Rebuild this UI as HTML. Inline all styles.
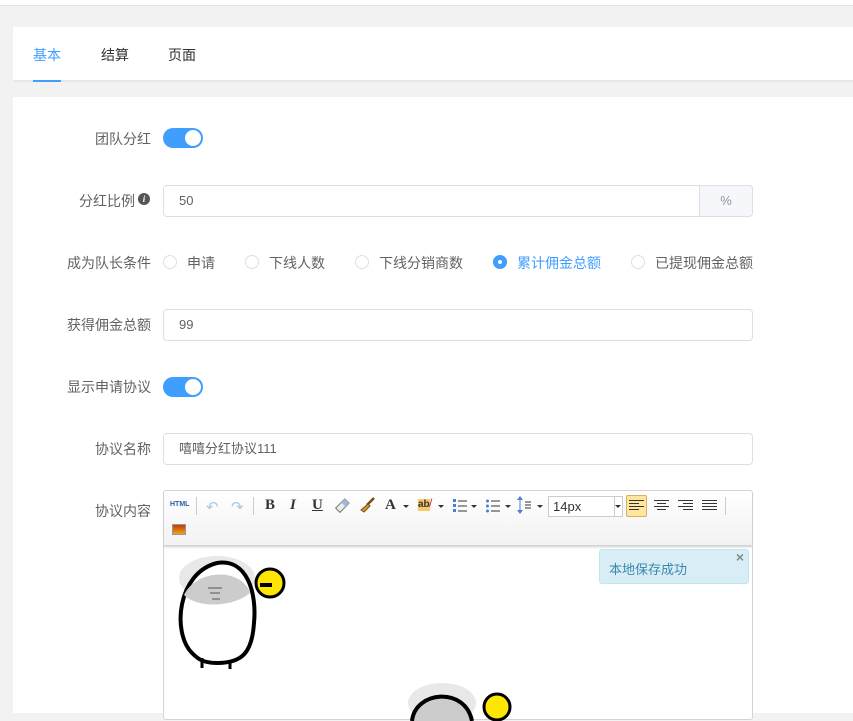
<!DOCTYPE html>
<html><head><meta charset="utf-8">
<style>
*{box-sizing:border-box;margin:0;padding:0}
body{width:853px;height:713px;overflow:hidden;background:#f2f2f2;font-family:"Liberation Sans","Noto Sans CJK SC",sans-serif;font-size:14px;color:#606266;position:relative}
.abs{position:absolute}
.top{left:0;top:0;width:853px;height:6px;background:#fff;border-bottom:1px solid #e4e4e4}
.tabs{left:13px;top:27px;width:840px;height:55px;background:#fff;border-bottom:2px solid #e4e7ed}
.tab{top:18px;font-size:14px;color:#303133}
.card{left:13px;top:97px;width:840px;height:616px;background:#fff}
.lbl{width:151px;text-align:right;font-size:14px;color:#606266}
.sw{width:40px;height:20px;border-radius:10px;background:#409eff}
.sw:after{content:"";position:absolute;right:2px;top:2px;width:16px;height:16px;border-radius:50%;background:#fff}
.inp{left:163px;width:590px;height:32px;border:1px solid #dcdfe6;border-radius:4px;background:#fff;padding-left:15px;line-height:30px;font-size:13px;color:#606266}
.rad{top:255px;width:14px;height:14px;border-radius:50%;border:1px solid #dcdfe6;background:#fff}
.rt{top:253px;font-size:14px;color:#606266}
.ed{left:163px;top:490px;width:590px;height:230px;border:1px solid #d4d4d4;border-radius:3px;background:#fff}
.tb{left:0;top:0;width:588px;height:55px;background:linear-gradient(#fff,#f2f2f2);border-bottom:1px solid #d4d4d4;box-shadow:0 1px 2px #ccc;border-radius:3px 3px 0 0}
.sep{top:6px;width:1px;height:18px;background:#ccc}
.ic{top:6px;font-family:"Liberation Serif",serif;font-size:15px;font-weight:bold;color:#333}
.car{top:14px;width:0;height:0;border-left:3px solid transparent;border-right:3px solid transparent;border-top:3px solid #333}
</style></head><body>
<div class="abs top"></div>
<div class="abs tabs">
 <div class="abs tab" style="left:20px;color:#409eff">基本</div>
 <div class="abs tab" style="left:88px">结算</div>
 <div class="abs tab" style="left:155px">页面</div>
 <div class="abs" style="left:20px;top:53px;width:28px;height:2px;background:#409eff"></div>
</div>
<div class="abs card"></div>

<div class="abs lbl" style="left:0;top:129px">团队分红</div>
<div class="abs sw" style="left:163px;top:128px"></div>

<div class="abs lbl" style="left:0;top:191px;width:135px">分红比例</div>
<div class="abs" style="left:138px;top:193px;width:12px;height:12px;border-radius:50%;background:#555;color:#fff;font:italic bold 9px 'Liberation Serif',serif;text-align:center;line-height:12px">i</div>
<div class="abs inp" style="top:185px">50</div>
<div class="abs" style="left:699px;top:185px;width:54px;height:32px;background:#f5f7fa;border:1px solid #dcdfe6;border-radius:0 4px 4px 0;text-align:center;line-height:30px;color:#909399;font-size:13px">%</div>

<div class="abs lbl" style="left:0;top:253px">成为队长条件</div>
<div class="abs rad" style="left:163px"></div><div class="abs rt" style="left:187px">申请</div>
<div class="abs rad" style="left:245px"></div><div class="abs rt" style="left:269px">下线人数</div>
<div class="abs rad" style="left:355px"></div><div class="abs rt" style="left:379px">下线分销商数</div>
<div class="abs rad" style="left:493px;background:#409eff;border-color:#409eff"><div style="position:absolute;left:4px;top:4px;width:4px;height:4px;border-radius:50%;background:#fff"></div></div><div class="abs rt" style="left:517px;color:#409eff">累计佣金总额</div>
<div class="abs rad" style="left:631px"></div><div class="abs rt" style="left:655px">已提现佣金总额</div>

<div class="abs lbl" style="left:0;top:315px">获得佣金总额</div>
<div class="abs inp" style="top:309px">99</div>

<div class="abs lbl" style="left:0;top:377px">显示申请协议</div>
<div class="abs sw" style="left:163px;top:377px"></div>

<div class="abs lbl" style="left:0;top:439px">协议名称</div>
<div class="abs inp" style="top:433px">嘻嘻分红协议111</div>

<div class="abs lbl" style="left:0;top:501px">协议内容</div>
<div class="abs ed">
 <div class="abs tb">
  <div class="abs" style="left:6px;top:10px;font:bold 7px 'Liberation Sans',sans-serif;color:#2a5d9f">HTML</div>
  <div class="abs sep" style="left:32px"></div>
  <div class="abs" style="left:42px;top:7px;color:#a9c8e8;font-size:15px">↶</div>
  <div class="abs" style="left:67px;top:7px;color:#a9c8e8;font-size:15px">↷</div>
  <div class="abs sep" style="left:89px"></div>
  <div class="abs ic" style="left:101px">B</div>
  <div class="abs ic" style="left:126px;font-style:italic">I</div>
  <div class="abs ic" style="left:148px;text-decoration:underline">U</div>
  <svg class="abs" style="left:170px;top:7px" width="16" height="16"><rect x="5" y="1" width="6" height="13" transform="rotate(45 8 8)" fill="#eee" stroke="#777"/><rect x="5" y="1" width="6" height="5" transform="rotate(45 8 8)" fill="#9bd"/></svg>
  <svg class="abs" style="left:195px;top:6px" width="16" height="16"><path d="M15 1 L8 8" stroke="#7a4a1a" stroke-width="2.5"/><path d="M9 7 L2 13 L5 15 L11 9Z" fill="#d89a2a" stroke="#7a4a1a"/></svg>
  <div class="abs ic" style="left:221px">A</div><div class="abs car" style="left:239px"></div>
  <div class="abs" style="left:254px;top:8px;font-size:10px;font-weight:bold;background:#f7c96a;color:#333;line-height:12px">ab</div><div class="abs" style="left:265px;top:5px;color:#b33;font-size:12px">/</div><div class="abs car" style="left:274px"></div>
  <svg class="abs" style="left:289px;top:8px" width="14" height="14"><g fill="#4a7fd0"><rect x="0" y="0" width="3" height="3"/><rect x="0" y="5" width="3" height="3"/><rect x="0" y="10" width="3" height="3"/></g><g stroke="#333"><path d="M5 2H14M5 7H14M5 12H14"/></g></svg><div class="abs car" style="left:307px"></div>
  <svg class="abs" style="left:322px;top:8px" width="14" height="14"><g fill="#4a7fd0"><circle cx="1.5" cy="2" r="1.5"/><circle cx="1.5" cy="7" r="1.5"/><circle cx="1.5" cy="12" r="1.5"/></g><g stroke="#333"><path d="M5 2H14M5 7H14M5 12H14"/></g></svg><div class="abs car" style="left:341px"></div>
  <svg class="abs" style="left:353px;top:5px" width="14" height="18"><path d="M3 1V17" stroke="#4a7fd0"/><path d="M0 4L3 0L6 4M0 14L3 18L6 14" fill="#4a7fd0"/><path d="M8 6H14M8 9H14M8 12H14" stroke="#333"/></svg><div class="abs car" style="left:373px"></div>
  <div class="abs" style="left:384px;top:5px;width:75px;height:21px;border:1px solid #ccc;background:#fff;font-size:13px;line-height:19px;padding-left:4px;color:#333">14px<div style="position:absolute;right:0;top:0;width:8px;height:19px;border-left:1px solid #ccc"></div><div style="position:absolute;right:1px;top:8px;border-left:3px solid transparent;border-right:3px solid transparent;border-top:3px solid #333"></div></div>
  <div class="abs" style="left:462px;top:4px;width:21px;height:22px;background:#ffe69f;border:1px solid #dcac6c;border-radius:2px"></div>
  <svg class="abs" style="left:465px;top:9px" width="16" height="12"><path d="M0 .5H15M0 3.5H10M0 6.5H15M0 9.5H10" stroke="#333"/></svg>
  <svg class="abs" style="left:490px;top:9px" width="16" height="12"><path d="M0 .5H15M3 3.5H12M0 6.5H15M3 9.5H12" stroke="#333"/></svg>
  <svg class="abs" style="left:514px;top:9px" width="16" height="12"><path d="M0 .5H15M5 3.5H15M0 6.5H15M5 9.5H15" stroke="#333"/></svg>
  <svg class="abs" style="left:538px;top:9px" width="16" height="12"><path d="M0 .5H15M0 3.5H15M0 6.5H15M0 9.5H15" stroke="#333"/></svg>
  <div class="abs sep" style="left:561px"></div>
  <div class="abs" style="left:8px;top:33px;width:14px;height:11px;border:1px solid #999;background:linear-gradient(#c04000,#f0a020)"></div>
 </div>
 <div class="abs" style="left:435px;top:58px;width:150px;height:35px;background:#d9edf7;border:1px solid #bce8f1;border-radius:3px;color:#3a87ad;font-size:13px;padding:9px 0 0 9px">本地保存成功<div style="position:absolute;right:4px;top:-1px;font-weight:bold;color:#888;font-size:14px">×</div></div>
 <svg class="abs" style="left:8px;top:62px" width="120" height="120">
  <ellipse cx="45" cy="25" rx="38" ry="22" fill="#e8e8e8"/>
  <path d="M20 100 C0 80 5 20 45 10 C75 5 85 40 82 70 C80 100 70 110 45 110 C30 110 25 105 20 100Z" fill="#fff" stroke="#000" stroke-width="4"/>
  <path d="M12 42 C25 15 70 15 78 40 C60 55 25 55 12 42Z" fill="#ccc"/>
  <path d="M36 35h14M38 40h10M40 46h8" stroke="#555"/>
  <path d="M30 105v10M58 108v8" stroke="#000" stroke-width="3"/>
  <circle cx="98" cy="30" r="14" fill="#ffe600" stroke="#000" stroke-width="3"/>
  <path d="M88 32h12" stroke="#000" stroke-width="4"/>
 </svg>
 <svg class="abs" style="left:236px;top:190px" width="120" height="40">
  <ellipse cx="42" cy="22" rx="34" ry="20" fill="#e8e8e8"/>
  <path d="M12 40 C15 10 65 5 72 40" fill="#ccc" stroke="#000" stroke-width="4"/>
  <circle cx="97" cy="26" r="13" fill="#ffe600" stroke="#000" stroke-width="3"/>
 </svg>
</div>
</body></html>
